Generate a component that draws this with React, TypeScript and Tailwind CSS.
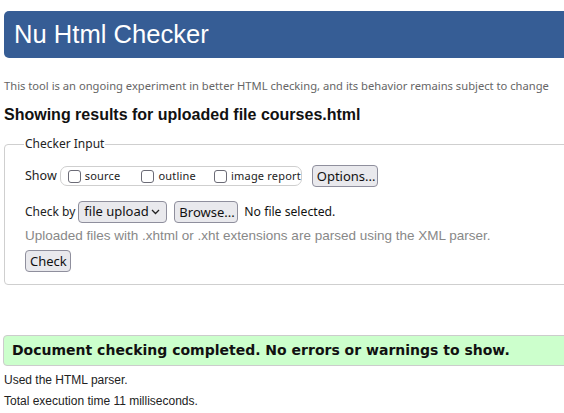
import React from 'react';

const ui = "font-['Noto_Sans',sans-serif]";

const Box: React.FC<{ label: string }> = ({ label }) => (
  <label className="flex items-center gap-[4px] shrink-0 whitespace-nowrap">
    <span className="w-[13px] h-[13px] border border-[#6b6b76] rounded-[3px] bg-white shrink-0" />
    <span className="text-[11px] tracking-[0.2px] text-[#222]">{label}</span>
  </label>
);

const Btn: React.FC<{ children: React.ReactNode; className?: string }> = ({ children, className }) => (
  <button
    className={`h-[22px] px-[4px] border border-[#8f8f9d] rounded-[4px] bg-[#e9e9ed] text-[13px] text-[#111] leading-none whitespace-nowrap shrink-0 ${ui} ${className ?? ''}`}
  >
    {children}
  </button>
);

export default function App() {
  return (
    <div className="w-[564px] h-[413px] overflow-hidden bg-white font-['Liberation_Sans',Arial,sans-serif]">
      <div className="pt-[11px] pl-[4px]">
        <div className="h-[47px] w-[600px] bg-[#365d95] rounded-l-[5px] flex items-center pl-[10px]">
          <h1 className="text-white text-[25.6px] leading-none">Nu Html Checker</h1>
        </div>
      </div>

      <p className={`ml-[4px] mt-[21px] text-[11.2px] leading-[14px] text-[#666] ${ui} whitespace-nowrap`}>
        This tool is an ongoing experiment in better HTML checking, and its behavior remains subject to change
      </p>

      <h2 className="ml-[4px] mt-[12px] text-[16px] font-bold leading-[19px] text-[#111]">
        Showing results for uploaded file courses.html
      </h2>

      <fieldset className="ml-[4px] mt-[11px] w-[600px] h-[150px] border border-[#cfcfcf] rounded-[4px] px-[20px] pt-[5px]">
        <legend className={`px-[1px] ml-[-1px] text-[12px] text-[#222] ${ui}`}>Checker Input</legend>

        <div className={`flex items-center mt-[7px] whitespace-nowrap ${ui}`}>
          <span className="text-[12.5px] text-[#222] mr-[3px]">Show</span>
          <div className="h-[20px] w-[242px] shrink-0 border border-[#cfcfcf] rounded-[7px] flex items-center pl-[7px]">
            <Box label="source" />
            <span className="w-[21px] shrink-0" />
            <Box label="outline" />
            <span className="w-[18px] shrink-0" />
            <Box label="image report" />
          </div>
          <Btn className="ml-[10px] w-[66px]">Options...</Btn>
        </div>

        <div className={`flex items-center mt-[14px] whitespace-nowrap ${ui}`}>
          <span className="text-[12px] text-[#222] mr-[3px]">Check by</span>
          <div className="h-[22px] w-[89px] shrink-0 border border-[#8f8f9d] rounded-[4px] bg-[#e9e9ed] flex items-center justify-between pl-[5px] pr-[6px] text-[13px] text-[#111]">
            <span>file upload</span>
            <svg width="9" height="6" viewBox="0 0 9 6" fill="none" stroke="#222" strokeWidth="1.3" className="shrink-0">
              <path d="M1 1l3.5 3.5L8 1" />
            </svg>
          </div>
          <Btn className="ml-[7px] w-[64px]">Browse...</Btn>
          <span className="ml-[6px] text-[12.2px] text-[#111]">No file selected.</span>
        </div>

        <p className="mt-[5px] text-[13.5px] leading-[16px] text-[#888] whitespace-nowrap">
          Uploaded files with .xhtml or .xht extensions are parsed using the XML parser.
        </p>

        <Btn className="mt-[6px] w-[46px] text-[13.5px]">Check</Btn>
      </fieldset>

      <div className="ml-[3px] mt-[50px] h-[31px] w-[600px] bg-[#ccffcc] border border-[#cccccc] rounded-l-[4px] flex items-center pl-[8px]">
        <span className="font-['DejaVu_Sans',Verdana,sans-serif] font-bold text-[14px] text-[#111] whitespace-nowrap">
          Document checking completed. No errors or warnings to show.
        </span>
      </div>

      <p className="ml-[4px] mt-[7px] text-[12px] leading-[14px] text-[#222]">Used the HTML parser.</p>
      <p className="ml-[4px] mt-[7px] text-[12px] leading-[14px] text-[#222]">Total execution time 11 milliseconds.</p>
    </div>
  );
}
